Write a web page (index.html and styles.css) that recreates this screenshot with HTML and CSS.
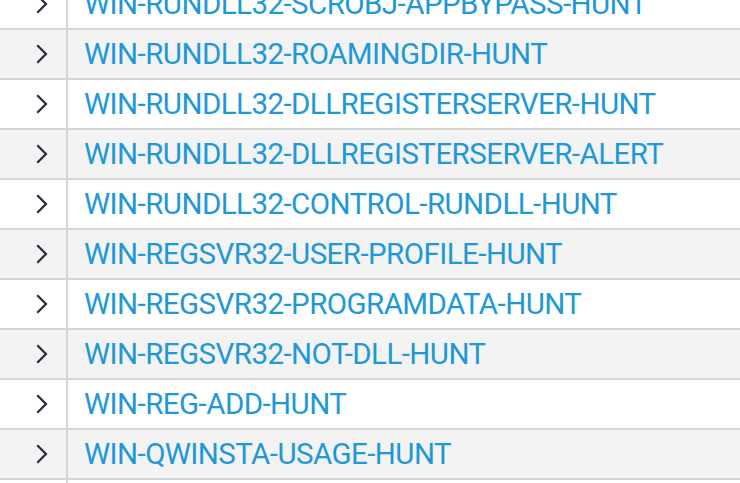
FILE: index.html
```html
<!DOCTYPE html>
<html>
<head>
<meta charset="utf-8">
<link rel="stylesheet" href="styles.css">
</head>
<body>
<div class="list">
  <div class="row"><div class="toggle"><svg class="chev" viewBox="0 0 12 20" width="12" height="20"><polyline points="2,2 10,10 2,18"/></svg></div><div class="name">WIN-RUNDLL32-SCROBJ-APPBYPASS-HUNT</div></div>
  <div class="row"><div class="toggle"><svg class="chev" viewBox="0 0 12 20" width="12" height="20"><polyline points="2,2 10,10 2,18"/></svg></div><div class="name">WIN-RUNDLL32-ROAMINGDIR-HUNT</div></div>
  <div class="row"><div class="toggle"><svg class="chev" viewBox="0 0 12 20" width="12" height="20"><polyline points="2,2 10,10 2,18"/></svg></div><div class="name">WIN-RUNDLL32-DLLREGISTERSERVER-HUNT</div></div>
  <div class="row"><div class="toggle"><svg class="chev" viewBox="0 0 12 20" width="12" height="20"><polyline points="2,2 10,10 2,18"/></svg></div><div class="name">WIN-RUNDLL32-DLLREGISTERSERVER-ALERT</div></div>
  <div class="row"><div class="toggle"><svg class="chev" viewBox="0 0 12 20" width="12" height="20"><polyline points="2,2 10,10 2,18"/></svg></div><div class="name">WIN-RUNDLL32-CONTROL-RUNDLL-HUNT</div></div>
  <div class="row"><div class="toggle"><svg class="chev" viewBox="0 0 12 20" width="12" height="20"><polyline points="2,2 10,10 2,18"/></svg></div><div class="name">WIN-REGSVR32-USER-PROFILE-HUNT</div></div>
  <div class="row"><div class="toggle"><svg class="chev" viewBox="0 0 12 20" width="12" height="20"><polyline points="2,2 10,10 2,18"/></svg></div><div class="name">WIN-REGSVR32-PROGRAMDATA-HUNT</div></div>
  <div class="row"><div class="toggle"><svg class="chev" viewBox="0 0 12 20" width="12" height="20"><polyline points="2,2 10,10 2,18"/></svg></div><div class="name">WIN-REGSVR32-NOT-DLL-HUNT</div></div>
  <div class="row"><div class="toggle"><svg class="chev" viewBox="0 0 12 20" width="12" height="20"><polyline points="2,2 10,10 2,18"/></svg></div><div class="name">WIN-REG-ADD-HUNT</div></div>
  <div class="row"><div class="toggle"><svg class="chev" viewBox="0 0 12 20" width="12" height="20"><polyline points="2,2 10,10 2,18"/></svg></div><div class="name">WIN-QWINSTA-USAGE-HUNT</div></div>
  <div class="row"><div class="toggle"></div><div class="name"></div></div>
</div>
</body>
</html>
```
FILE: styles.css
```css
html, body {
  margin: 0;
  padding: 0;
  background: #ffffff;
  overflow: hidden;
}
.list {
  margin-top: -20px;
  font-family: Roboto, "Liberation Sans", sans-serif;
}
.row {
  display: flex;
  height: 48px;
  border-bottom: 2px solid #d6d6d6;
  background: #ffffff;
}
.row:nth-child(even) {
  background: #f3f3f3;
}
.toggle {
  width: 68px;
  flex: none;
  border-right: 2px solid #d6d6d6;
  display: flex;
  align-items: center;
  justify-content: flex-start;
  padding-left: 36px;
  box-sizing: border-box;
}
.chev {
  fill: none;
  stroke: #262a3a;
  stroke-width: 2.2;
  stroke-linecap: square;
  stroke-linejoin: miter;
}
.name {
  display: flex;
  align-items: center;
  padding-left: 16px;
  font-size: 29.5px;
  letter-spacing: -0.55px;
  color: #1e98d8;
  white-space: nowrap;
}
```
